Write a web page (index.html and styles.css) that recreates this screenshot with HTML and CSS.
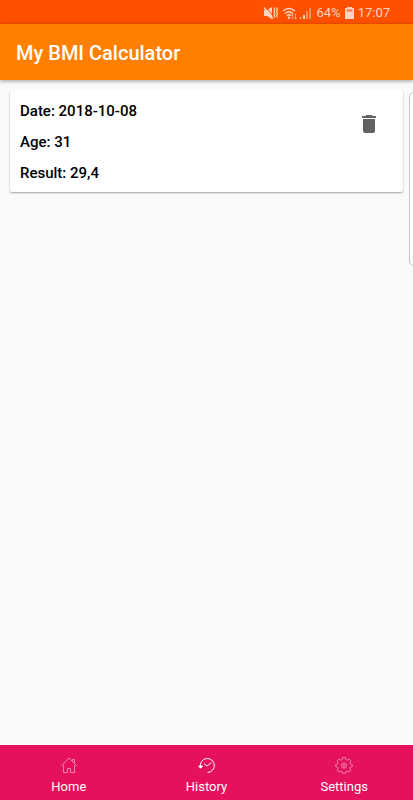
FILE: index.html
```
<!DOCTYPE html>
<html lang="en">
<head>
    <meta charset="UTF-8">
    <meta name="viewport" content="width=device-width, initial-scale=1.0">
    <title>My BMI Calculator</title>
    <link rel="stylesheet" href="styles.css">
</head>
<body>
    <div class="status-bar">
        <svg class="status-icon" width="15" height="14" viewBox="0 0 15 14">
            <path d="M1 4h3l5-3v12L4 10H1z" fill="currentColor"/>
            <path d="M2.500 .5l8 10" stroke="#ff5000" stroke-width="1"/>
            <path d="M1 1.500l9 11" stroke="currentColor" stroke-width="1.300"/>
            <path d="M11 1.500l1 2-1 2 1 2-1 2 1 2M13.500 1.500l1 2-1 2 1 2-1 2 1 2" fill="none" stroke="currentColor" stroke-width="1.200"/>
        </svg>
        <svg class="status-icon wifi" width="15" height="14" viewBox="0 0 15 14">
            <path d="M1 5q6-5 12 0M3 7.500q4-3.500 8 0M5 9.800q2-2 4 0" fill="none" stroke="currentColor" stroke-width="1.500"/>
            <circle cx="7" cy="11.800" r="1.200" fill="currentColor"/>
            <path d="M10.500 8v5M9.300 9.300L10.500 8l1.200 1.300M13.500 8v5M12.300 11.700l1.200 1.300 1.200-1.300" fill="none" stroke="currentColor" stroke-width=".8" opacity=".8"/>
        </svg>
        <svg class="status-icon" width="13" height="14" viewBox="0 0 13 14">
            <path d="M1 11h1v2H1zM4 9h2v4H4z" fill="currentColor"/>
            <path d="M7 5h2v8H7zM10 2h2v11h-2z" fill="currentColor" opacity=".45"/>
        </svg>
        <span class="battery-level">64%</span>
        <svg class="status-icon" width="9" height="14" viewBox="0 0 9 14">
            <path d="M2 1h5v1h2v11H0V2h2z" fill="currentColor"/>
            <path d="M1.500 3.500h6v2h-6z" fill="#ff5000" opacity=".7"/>
        </svg>
        <span>17:07</span>
    </div>

    <header class="app-bar">
        <h1 class="title">My BMI Calculator</h1>
    </header>

    <main class="content">
        <div class="card">
            <div class="card-text">
                <div>Date: 2018-10-08</div>
                <div>Age: 31</div>
                <div>Result: 29,4</div>
            </div>
            <button class="delete" type="button" aria-label="Delete">
                <svg width="24" height="24" viewBox="0 0 24 24">
                    <path d="M6 19c0 1.100.9 2 2 2h8c1.100 0 2-.9 2-2V7H6v12zM19 4h-3.500l-1-1h-5l-1 1H5v2h14V4z" fill="#626262"/>
                </svg>
            </button>
        </div>
        <div class="edge-handle"></div>
    </main>

    <nav class="tabs">
        <a class="tab" href="#home">
            <svg class="tab-icon" width="18" height="18" viewBox="0 0 18 18">
                <path d="M1 10l8-8 8 8M12.500 5.500V3.500h2v4M3.500 9v7.500h4v-4h3v4h4V9"/>
            </svg>
            <span>Home</span>
        </a>
        <a class="tab active" href="#history">
            <svg class="tab-icon" width="18" height="18" viewBox="0 0 18 18">
                <path d="M2.500 11A7 7 0 1 1 9.500 16.500M6 7.500l3 2.500 4.500-3.500"/>
                <path d="M.8 10l1.700 2.200 2.200-2.200z" fill="#fff"/>
            </svg>
            <span>History</span>
        </a>
        <a class="tab" href="#settings">
            <svg class="tab-icon" width="18" height="18" viewBox="0 0 18 18">
                <path d="M7.700 1.500h2.600l.5 2 1.300.6 1.900-1.100 1.900 1.900-1.100 1.900.5 1.200 2 .6v2l-2 .6-.5 1.200 1.100 1.900-1.900 1.900-1.900-1.100-1.300.6-.5 2H7.700l-.5-2-1.300-.6L4 16.200l-1.900-1.900 1.100-1.900-.5-1.200-2-.6v-2l2-.6.5-1.200L2.100 4.900 4 3l1.900 1.100 1.300-.6z"/>
                <circle cx="9" cy="9.500" r="2.700"/>
                <circle cx="9" cy="9.500" r="1"/>
            </svg>
            <span>Settings</span>
        </a>
    </nav>
</body>
</html>
```
FILE: styles.css
```
body {
    margin: 0;
    min-height: 100vh;
    display: flex;
    flex-direction: column;
    background: #fafafa;
    color: #000;
    font-family: Roboto, "Liberation Sans", sans-serif;
}

.status-bar {
    display: flex;
    align-items: center;
    justify-content: flex-end;
    height: 24px;
    padding: 1px 23px 0 0;
    box-sizing: border-box;
    background: #ff5000;
    color: #ffd5c2;
    font-size: 13px;
}

.status-icon,
.battery-level {
    margin-right: 4px;
}

.wifi {
    margin-right: 2px;
}

.app-bar {
    position: relative;
    display: flex;
    align-items: center;
    height: 56px;
    padding: 2px 16px 0;
    box-sizing: border-box;
    background: #ff8000;
    box-shadow: 0 1px 4px rgba(0, 0, 0, 0.4);
}

.title {
    margin: 0;
    color: #fff;
    font-size: 20px;
    font-weight: 500;
}

.content {
    position: relative;
    flex: 1;
    padding: 10px;
    overflow: hidden;
}

.card {
    display: flex;
    justify-content: space-between;
    align-items: flex-start;
    padding: 6px 10px 3px;
    background: #fff;
    border-radius: 2px;
    box-shadow: 0 1px 2px rgba(0, 0, 0, 0.35);
}

.card-text {
    font-size: 15px;
    font-weight: 500;
    line-height: 31px;
}

.delete {
    display: flex;
    margin: 16px 12px 0 0;
    padding: 0;
    border: 0;
    background: none;
}

/* slide-out panel handle at the screen edge */
.edge-handle {
    position: absolute;
    top: 12px;
    right: -7px;
    width: 9px;
    height: 172px;
    border: 1px solid #c4c4c4;
    border-radius: 5px;
    background: #fff;
}

.tabs {
    display: flex;
    height: 55px;
    background: #e5115d;
}

.tab {
    flex: 1;
    display: flex;
    flex-direction: column;
    align-items: center;
    gap: 4px;
    padding-top: 11px;
    color: #fff;
    font-size: 13px;
    line-height: 18px;
    text-decoration: none;
}

.tab-icon {
    fill: none;
    stroke: #f283ab;
    stroke-width: 1;
}

.active .tab-icon {
    stroke: #fff;
}
```
